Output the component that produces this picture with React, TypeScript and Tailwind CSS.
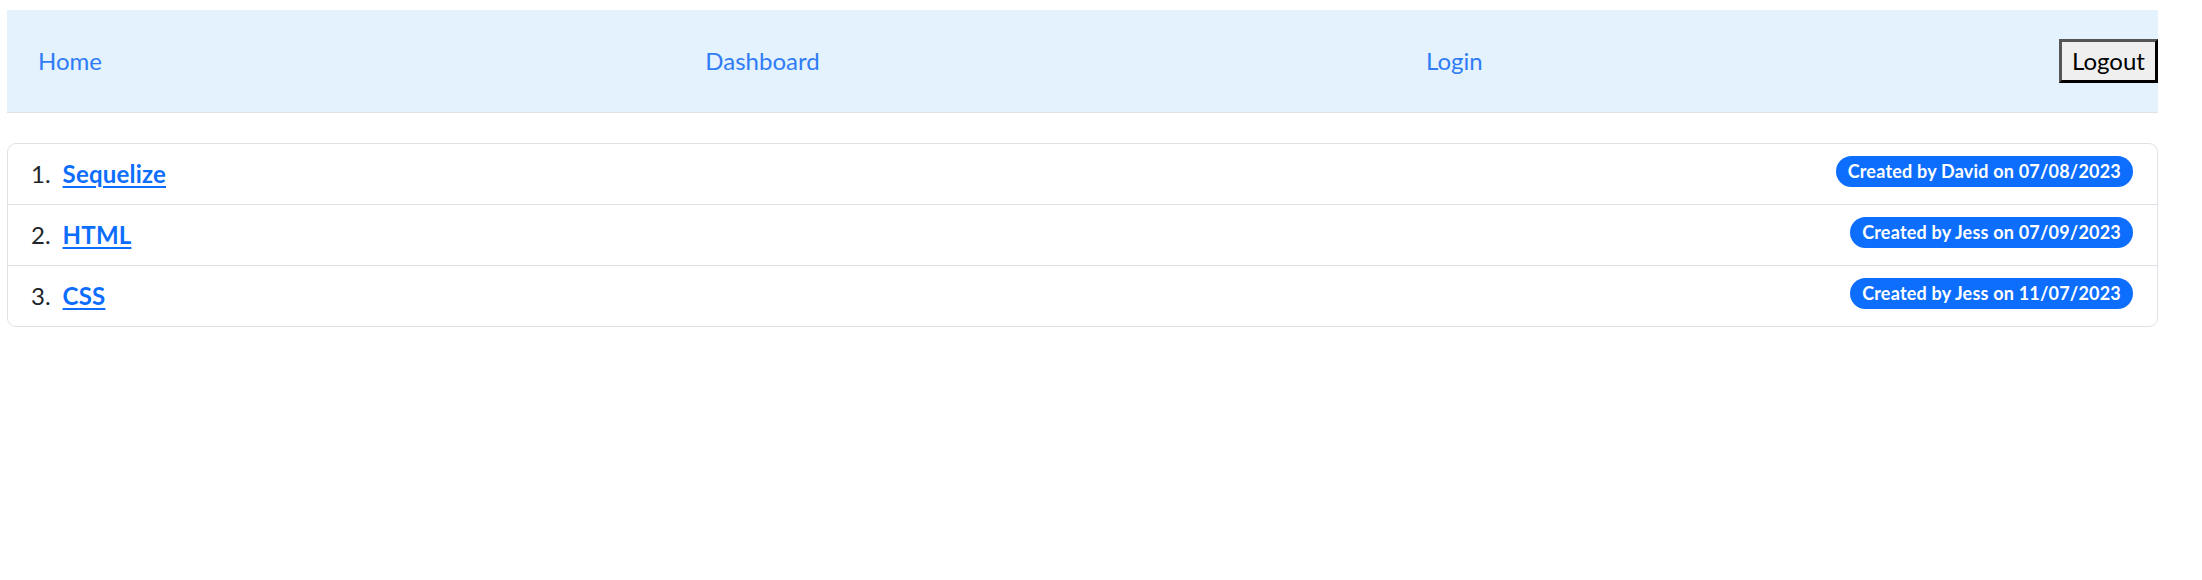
import React from "react";

const items = [
  { n: 1, title: "Sequelize", badge: "Created by David on 07/08/2023" },
  { n: 2, title: "HTML", badge: "Created by Jess on 07/09/2023" },
  { n: 3, title: "CSS", badge: "Created by Jess on 11/07/2023" },
];

export default function App() {
  return (
    <div
      className="min-h-[580px] bg-white text-[#212529] pt-[10px] pl-[7px]"
      style={{ fontFamily: "Lato, 'Open Sans', sans-serif" }}
    >
      <nav className="w-[2151px] h-[103px] bg-[#e3f2fd] border-b border-[#dee2e6] flex items-center justify-between pl-[7px] text-[24px]">
        <a href="#" className="px-[24px] text-[#2f7cf6] leading-[36px]">Home</a>
        <a href="#" className="px-[24px] text-[#2f7cf6] leading-[36px]">Dashboard</a>
        <a href="#" className="px-[24px] text-[#2f7cf6] leading-[36px] relative left-[3px]">Login</a>
        <button className="w-[99px] h-[44px] bg-[#efefef] border-[3px] border-t-[#555] border-l-[#555] border-r-black border-b-black text-black text-[24px] leading-none flex items-center justify-center">
          Logout
        </button>
      </nav>
      <ol className="mt-[30px] w-[2151px] border border-[#dee2e6] rounded-[9px] text-[24px]">
        {items.map((it, i) => (
          <li
            key={it.n}
            className={`flex items-start justify-between px-[24px] pt-[12px] pb-[12px] ${i > 0 ? "border-t border-[#dee2e6]" : ""}`}
          >
            <div className="flex items-start leading-[36px]">
              <span className="-ml-[1px]">{it.n}.</span>
              <a href="#" className="ml-[12px] font-bold text-[#0d6efd] underline underline-offset-[3px] tracking-[0.2px]">
                {it.title}
              </a>
            </div>
            <span className="bg-[#0d6efd] text-white font-bold text-[18px] leading-[19px] px-[12px] py-[6px] rounded-full tracking-[0.2px]">
              {it.badge}
            </span>
          </li>
        ))}
      </ol>
    </div>
  );
}
